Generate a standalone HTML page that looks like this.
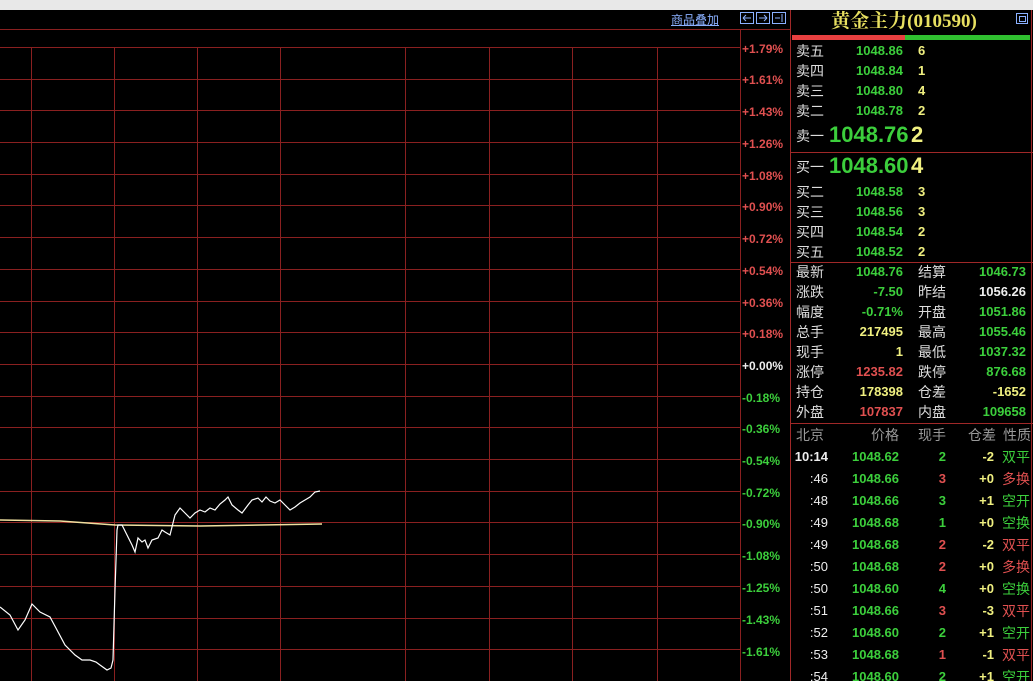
<!DOCTYPE html>
<html><head><meta charset="utf-8"><style>
html,body{margin:0;width:1033px;height:681px;overflow:hidden}
body{background:#000;position:relative;font-family:"Liberation Sans","Noto Sans CJK SC",sans-serif}
.a{position:absolute;white-space:nowrap}
.lb{font-size:14px;color:#ddd;font-family:"Noto Sans CJK SC",sans-serif}
.n{font-size:13px;font-weight:bold;text-align:right}
.g{color:#3ccf3c}.y{color:#f0f080}.r{color:#e05050}.w{color:#eee}
.ax{font-size:12px;font-weight:bold;left:742px}
</style></head><body>
<div class="a" style="left:0;top:0;width:1033px;height:10px;background:#e8e8e8"></div>
<svg class="a" style="left:0;top:0" width="1033" height="681">
<g stroke="#8a2020" stroke-width="1">
<line x1="0" y1="29.5" x2="790" y2="29.5"/>
<line x1="0" y1="47.5" x2="740" y2="47.5"/><line x1="0" y1="79.5" x2="740" y2="79.5"/><line x1="0" y1="110.5" x2="740" y2="110.5"/><line x1="0" y1="142.5" x2="740" y2="142.5"/><line x1="0" y1="174.5" x2="740" y2="174.5"/><line x1="0" y1="205.5" x2="740" y2="205.5"/><line x1="0" y1="237.5" x2="740" y2="237.5"/><line x1="0" y1="269.5" x2="740" y2="269.5"/><line x1="0" y1="301.5" x2="740" y2="301.5"/><line x1="0" y1="332.5" x2="740" y2="332.5"/><line x1="0" y1="364.5" x2="740" y2="364.5"/><line x1="0" y1="396.5" x2="740" y2="396.5"/><line x1="0" y1="427.5" x2="740" y2="427.5"/><line x1="0" y1="459.5" x2="740" y2="459.5"/><line x1="0" y1="491.5" x2="740" y2="491.5"/><line x1="0" y1="522.5" x2="740" y2="522.5"/><line x1="0" y1="554.5" x2="740" y2="554.5"/><line x1="0" y1="586.5" x2="740" y2="586.5"/><line x1="0" y1="618.5" x2="740" y2="618.5"/><line x1="0" y1="649.5" x2="740" y2="649.5"/>
<line x1="31.5" y1="47" x2="31.5" y2="681"/><line x1="114.5" y1="47" x2="114.5" y2="681"/><line x1="197.5" y1="47" x2="197.5" y2="681"/><line x1="280.5" y1="47" x2="280.5" y2="681"/><line x1="405.5" y1="47" x2="405.5" y2="681"/><line x1="489.5" y1="47" x2="489.5" y2="681"/><line x1="572.5" y1="47" x2="572.5" y2="681"/><line x1="657.5" y1="47" x2="657.5" y2="681"/>
<line x1="740.5" y1="29" x2="740.5" y2="681"/>
</g>
<g stroke="#a02828"><line x1="790.5" y1="10" x2="790.5" y2="681"/><line x1="1031.5" y1="10" x2="1031.5" y2="681"/>
<line x1="790" y1="152.5" x2="1033" y2="152.5"/><line x1="790" y1="262.5" x2="1033" y2="262.5"/><line x1="790" y1="423.5" x2="1033" y2="423.5"/></g>
<rect x="792" y="35" width="113" height="5" fill="#e84040"/><rect x="905" y="35" width="125" height="5" fill="#30c030"/>
<polyline fill="none" stroke="#f0e0a0" stroke-width="1.5" points="0,520 60,521 115,525 200,526 322,524"/>
<polyline fill="none" stroke="#fff" stroke-width="1.2" points="0,607 10,615 18,630 25,620 32,604 40,612 50,617 57,630 65,645 75,655 82,660 90,660 96,662 100,665 107,670 111,668 113,660 115,590 117,530 118,525 122,525 127,535 132,545 135,552 138,538 142,542 145,540 148,548 152,540 158,538 162,530 165,532 170,535 175,515 180,508 185,513 190,518 195,513 200,510 205,512 210,508 215,510 220,504 225,500 228,497 232,505 238,510 242,513 248,505 252,500 258,498 262,502 266,497 270,501 275,503 280,500 285,505 290,510 295,507 300,503 305,500 310,497 315,492 320,491"/>
<g fill="none" stroke="#8ab0ff"><rect x="740.5" y="12.5" width="13" height="11"/><rect x="756.5" y="12.5" width="13" height="11"/><rect x="772.5" y="12.5" width="13" height="11"/><rect x="1016.5" y="13.5" width="11" height="10"/><rect x="1019.5" y="16.5" width="6" height="5"/>
<path d="M743,18 L746,15 M743,18 L746,21 M743,18 L751,18"/>
<path d="M767,18 L764,15 M767,18 L764,21 M759,18 L767,18"/>
<path d="M775,18 L780,18 M782,14 L782,22"/></g>
</svg>
<div class="a" style="left:671px;top:12px;font-size:12px;color:#8ab0ff;text-decoration:underline;font-family:'Noto Sans CJK SC',sans-serif;line-height:15px">商品叠加</div>
<div class="a" style="left:790px;top:9px;width:228px;text-align:center;font-size:19px;color:#e8e060;font-family:'Liberation Serif','Noto Serif CJK SC',serif;font-weight:bold;line-height:26px">黄金主力(010590)</div>

<div class="a ax r" style="top:42px">+1.79%</div><div class="a ax r" style="top:73px">+1.61%</div><div class="a ax r" style="top:105px">+1.43%</div><div class="a ax r" style="top:137px">+1.26%</div><div class="a ax r" style="top:169px">+1.08%</div><div class="a ax r" style="top:200px">+0.90%</div><div class="a ax r" style="top:232px">+0.72%</div><div class="a ax r" style="top:264px">+0.54%</div><div class="a ax r" style="top:296px">+0.36%</div><div class="a ax r" style="top:327px">+0.18%</div><div class="a ax w" style="top:359px">+0.00%</div><div class="a ax g" style="top:391px">-0.18%</div><div class="a ax g" style="top:422px">-0.36%</div><div class="a ax g" style="top:454px">-0.54%</div><div class="a ax g" style="top:486px">-0.72%</div><div class="a ax g" style="top:517px">-0.90%</div><div class="a ax g" style="top:549px">-1.08%</div><div class="a ax g" style="top:581px">-1.25%</div><div class="a ax g" style="top:613px">-1.43%</div><div class="a ax g" style="top:645px">-1.61%</div>

<div class="a lb" style="left:796px;top:41px">卖五</div><div class="a n g" style="left:840px;width:63px;top:43px">1048.86</div><div class="a n y" style="left:918px;top:43px">6</div>
<div class="a lb" style="left:796px;top:61px">卖四</div><div class="a n g" style="left:840px;width:63px;top:63px">1048.84</div><div class="a n y" style="left:918px;top:63px">1</div>
<div class="a lb" style="left:796px;top:81px">卖三</div><div class="a n g" style="left:840px;width:63px;top:83px">1048.80</div><div class="a n y" style="left:918px;top:83px">4</div>
<div class="a lb" style="left:796px;top:101px">卖二</div><div class="a n g" style="left:840px;width:63px;top:103px">1048.78</div><div class="a n y" style="left:918px;top:103px">2</div>
<div class="a lb" style="left:796px;top:126px">卖一</div><div class="a g" style="left:829px;top:122px;font-size:22px;font-weight:bold">1048.76</div><div class="a y" style="left:911px;top:122px;font-size:22px;font-weight:bold">2</div>
<div class="a lb" style="left:796px;top:157px">买一</div><div class="a g" style="left:829px;top:153px;font-size:22px;font-weight:bold">1048.60</div><div class="a y" style="left:911px;top:153px;font-size:22px;font-weight:bold">4</div>
<div class="a lb" style="left:796px;top:182px">买二</div><div class="a n g" style="left:840px;width:63px;top:184px">1048.58</div><div class="a n y" style="left:918px;top:184px">3</div>
<div class="a lb" style="left:796px;top:202px">买三</div><div class="a n g" style="left:840px;width:63px;top:204px">1048.56</div><div class="a n y" style="left:918px;top:204px">3</div>
<div class="a lb" style="left:796px;top:222px">买四</div><div class="a n g" style="left:840px;width:63px;top:224px">1048.54</div><div class="a n y" style="left:918px;top:224px">2</div>
<div class="a lb" style="left:796px;top:242px">买五</div><div class="a n g" style="left:840px;width:63px;top:244px">1048.52</div><div class="a n y" style="left:918px;top:244px">2</div>

<div class="a lb" style="left:796px;top:262px">最新</div><div class="a n g" style="left:840px;width:63px;top:264px">1048.76</div><div class="a lb" style="left:918px;top:262px">结算</div><div class="a n g" style="left:960px;width:66px;top:264px">1046.73</div>
<div class="a lb" style="left:796px;top:282px">涨跌</div><div class="a n g" style="left:840px;width:63px;top:284px">-7.50</div><div class="a lb" style="left:918px;top:282px">昨结</div><div class="a n w" style="left:960px;width:66px;top:284px">1056.26</div>
<div class="a lb" style="left:796px;top:302px">幅度</div><div class="a n g" style="left:830px;width:73px;top:304px">-0.71%</div><div class="a lb" style="left:918px;top:302px">开盘</div><div class="a n g" style="left:960px;width:66px;top:304px">1051.86</div>
<div class="a lb" style="left:796px;top:322px">总手</div><div class="a n y" style="left:840px;width:63px;top:324px">217495</div><div class="a lb" style="left:918px;top:322px">最高</div><div class="a n g" style="left:960px;width:66px;top:324px">1055.46</div>
<div class="a lb" style="left:796px;top:342px">现手</div><div class="a n y" style="left:840px;width:63px;top:344px">1</div><div class="a lb" style="left:918px;top:342px">最低</div><div class="a n g" style="left:960px;width:66px;top:344px">1037.32</div>
<div class="a lb" style="left:796px;top:362px">涨停</div><div class="a n r" style="left:840px;width:63px;top:364px">1235.82</div><div class="a lb" style="left:918px;top:362px">跌停</div><div class="a n g" style="left:960px;width:66px;top:364px">876.68</div>
<div class="a lb" style="left:796px;top:382px">持仓</div><div class="a n y" style="left:840px;width:63px;top:384px">178398</div><div class="a lb" style="left:918px;top:382px">仓差</div><div class="a n y" style="left:960px;width:66px;top:384px">-1652</div>
<div class="a lb" style="left:796px;top:402px">外盘</div><div class="a n r" style="left:840px;width:63px;top:404px">107837</div><div class="a lb" style="left:918px;top:402px">内盘</div><div class="a n g" style="left:960px;width:66px;top:404px">109658</div>

<div class="a lb" style="left:796px;top:425px;color:#999">北京</div><div class="a lb" style="left:871px;top:425px;color:#999">价格</div><div class="a lb" style="left:918px;top:425px;color:#999">现手</div><div class="a lb" style="left:968px;top:425px;color:#999">仓差</div><div class="a lb" style="left:1003px;top:425px;color:#999">性质</div>

<div class="a n w" style="left:790px;width:38px;top:449px">10:14</div><div class="a n g" style="left:840px;width:59px;top:449px">1048.62</div><div class="a n g" style="left:900px;width:46px;top:449px">2</div><div class="a n y" style="left:950px;width:44px;top:449px">-2</div><div class="a lb g" style="left:1002px;top:447px">双平</div>
<div class="a n w" style="left:790px;width:38px;top:471px;font-weight:normal">:46</div><div class="a n g" style="left:840px;width:59px;top:471px">1048.66</div><div class="a n r" style="left:900px;width:46px;top:471px">3</div><div class="a n y" style="left:950px;width:44px;top:471px">+0</div><div class="a lb r" style="left:1002px;top:469px">多换</div>
<div class="a n w" style="left:790px;width:38px;top:493px;font-weight:normal">:48</div><div class="a n g" style="left:840px;width:59px;top:493px">1048.66</div><div class="a n g" style="left:900px;width:46px;top:493px">3</div><div class="a n y" style="left:950px;width:44px;top:493px">+1</div><div class="a lb g" style="left:1002px;top:491px">空开</div>
<div class="a n w" style="left:790px;width:38px;top:515px;font-weight:normal">:49</div><div class="a n g" style="left:840px;width:59px;top:515px">1048.68</div><div class="a n g" style="left:900px;width:46px;top:515px">1</div><div class="a n y" style="left:950px;width:44px;top:515px">+0</div><div class="a lb g" style="left:1002px;top:513px">空换</div>
<div class="a n w" style="left:790px;width:38px;top:537px;font-weight:normal">:49</div><div class="a n g" style="left:840px;width:59px;top:537px">1048.68</div><div class="a n r" style="left:900px;width:46px;top:537px">2</div><div class="a n y" style="left:950px;width:44px;top:537px">-2</div><div class="a lb r" style="left:1002px;top:535px">双平</div>
<div class="a n w" style="left:790px;width:38px;top:559px;font-weight:normal">:50</div><div class="a n g" style="left:840px;width:59px;top:559px">1048.68</div><div class="a n r" style="left:900px;width:46px;top:559px">2</div><div class="a n y" style="left:950px;width:44px;top:559px">+0</div><div class="a lb r" style="left:1002px;top:557px">多换</div>
<div class="a n w" style="left:790px;width:38px;top:581px;font-weight:normal">:50</div><div class="a n g" style="left:840px;width:59px;top:581px">1048.60</div><div class="a n g" style="left:900px;width:46px;top:581px">4</div><div class="a n y" style="left:950px;width:44px;top:581px">+0</div><div class="a lb g" style="left:1002px;top:579px">空换</div>
<div class="a n w" style="left:790px;width:38px;top:603px;font-weight:normal">:51</div><div class="a n g" style="left:840px;width:59px;top:603px">1048.66</div><div class="a n r" style="left:900px;width:46px;top:603px">3</div><div class="a n y" style="left:950px;width:44px;top:603px">-3</div><div class="a lb r" style="left:1002px;top:601px">双平</div>
<div class="a n w" style="left:790px;width:38px;top:625px;font-weight:normal">:52</div><div class="a n g" style="left:840px;width:59px;top:625px">1048.60</div><div class="a n g" style="left:900px;width:46px;top:625px">2</div><div class="a n y" style="left:950px;width:44px;top:625px">+1</div><div class="a lb g" style="left:1002px;top:623px">空开</div>
<div class="a n w" style="left:790px;width:38px;top:647px;font-weight:normal">:53</div><div class="a n g" style="left:840px;width:59px;top:647px">1048.68</div><div class="a n r" style="left:900px;width:46px;top:647px">1</div><div class="a n y" style="left:950px;width:44px;top:647px">-1</div><div class="a lb r" style="left:1002px;top:645px">双平</div>
<div class="a n w" style="left:790px;width:38px;top:669px;font-weight:normal">:54</div><div class="a n g" style="left:840px;width:59px;top:669px">1048.60</div><div class="a n g" style="left:900px;width:46px;top:669px">2</div><div class="a n y" style="left:950px;width:44px;top:669px">+1</div><div class="a lb g" style="left:1002px;top:667px">空开</div>
</body></html>
